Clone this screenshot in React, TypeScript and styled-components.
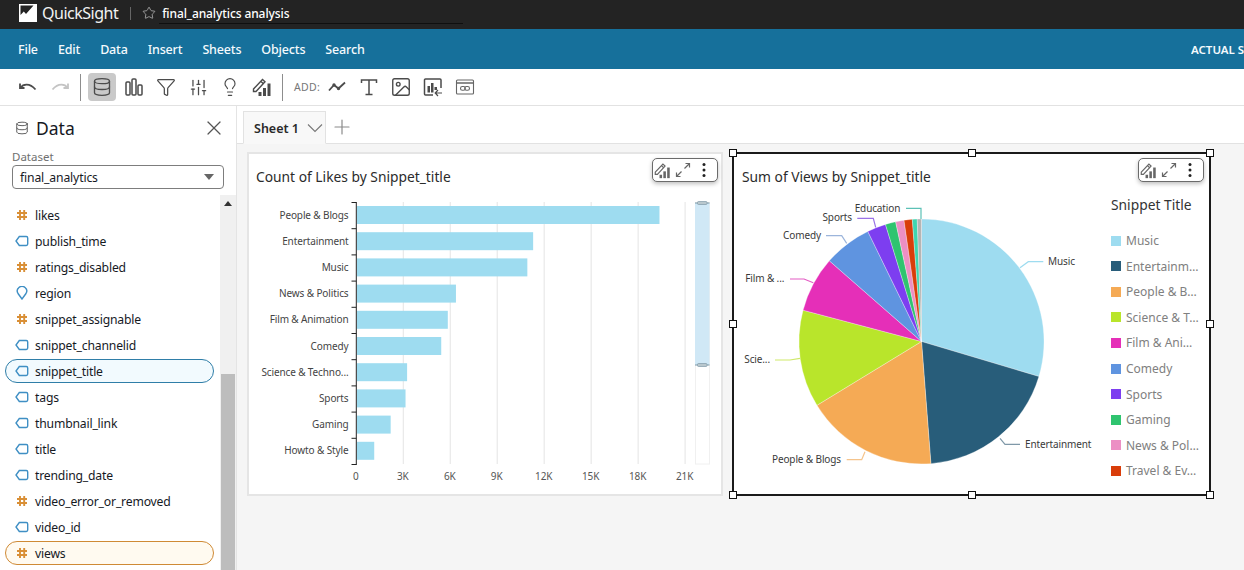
import React from "react";
import styled, { createGlobalStyle } from "styled-components";
import { Database, Filter, Image, Lightbulb, Plus, SlidersVertical, Star, X } from "lucide-react";

const font = `"Noto Sans", "Open Sans", Arial, sans-serif`;

const GlobalStyle = createGlobalStyle`
  html, body {
    margin: 0;
    padding: 0;
    background: #fff;
  }
  * {
    box-sizing: border-box;
  }
`;

const Page = styled.div`
  width: 1244px;
  height: 570px;
  overflow: hidden;
  display: flex;
  flex-direction: column;
  font-family: ${font};
  color: #16191f;
`;

const TopBar = styled.header`
  height: 29px;
  flex: none;
  background: #232323;
  display: flex;
  align-items: center;
  padding-left: 19px;
  padding-bottom: 3px;
  color: #fff;
`;

const Brand = styled.span`
  font-size: 16px;
  margin-left: 5px;
  letter-spacing: -0.5px;
  color: #f2f2f2;
`;

const TopDivider = styled.span`
  width: 1px;
  height: 13px;
  background: #666;
  margin: 0 11px 0 12px;
`;

const AnalysisName = styled.div`
  display: flex;
  align-items: center;
  width: 321px;
  gap: 6px;
  font-size: 12px;
  letter-spacing: -0.1px;
  font-weight: 500;
  height: 22px;
  position: relative;
  &::after {
    content: "";
    position: absolute;
    left: 17px;
    right: 0;
    bottom: 0;
    height: 1px;
    background: #0f0f0f;
  }
`;

const MenuBar = styled.nav`
  height: 40px;
  flex: none;
  background: #16709b;
  display: flex;
  align-items: center;
  padding-left: 18px;
  gap: 20px;
  color: #f4fafd;
  font-size: 12.5px;
  font-weight: 500;
  letter-spacing: -0.16px;
`;

const SizeLabel = styled.span`
  margin-left: auto;
  flex: 0 0 53px;
  overflow: hidden;
  white-space: nowrap;
  font-size: 11.5px;
  font-weight: 600;
  letter-spacing: 0;
`;

const Toolbar = styled.div`
  height: 37px;
  flex: none;
  display: flex;
  align-items: center;
  padding-left: 14px;
  gap: 4px;
  background: #fff;
  border-bottom: 1px solid #e2e2e2;
`;

const ToolButton = styled.span<{ $active?: boolean; $muted?: boolean }>`
  width: 28px;
  height: 28px;
  border-radius: 4px;
  display: flex;
  align-items: center;
  justify-content: center;
  background: ${(p) => (p.$active ? "#c9c9c9" : "transparent")};
  color: ${(p) => (p.$muted ? "#c4c4c4" : "#4b4b4b")};
`;

const ToolDivider = styled.span`
  width: 1px;
  height: 27px;
  background: #8d8d8d;
  margin: 0 3px 0 2px;
`;

const AddLabel = styled.span`
  font-size: 10.5px;
  color: #777;
  letter-spacing: 0.3px;
  margin-left: 4px;
  width: 25px;
`;

const Body = styled.div`
  flex: 1;
  min-height: 0;
  display: flex;
`;

const Sidebar = styled.aside`
  width: 237px;
  flex: none;
  border-right: 1px solid #e4e4e4;
  display: flex;
  flex-direction: column;
  min-height: 0;
`;

const SideHeader = styled.div`
  display: flex;
  align-items: center;
  height: 44px;
  padding: 0 10px 0 15px;
  color: #555;
  gap: 7px;
`;

const SideTitle = styled.h2`
  margin: 0;
  flex: 1;
  font-size: 17.5px;
  font-weight: 400;
  color: #16191f;
`;

const FieldLabel = styled.div`
  font-size: 11.5px;
  line-height: 14px;
  color: #6f6f6f;
  margin-left: 12px;
`;

const DatasetSelect = styled.div`
  margin: 1px 12px 0;
  height: 24px;
  border: 1px solid #7d7d7d;
  border-radius: 4px;
  display: flex;
  align-items: center;
  justify-content: space-between;
  padding: 0 9px 0 7px;
  font-size: 12.2px;
  letter-spacing: -0.15px;
  &::after {
    content: "";
    border-left: 5px solid transparent;
    border-right: 5px solid transparent;
    border-top: 6px solid #666;
  }
`;

const FieldArea = styled.div`
  margin-top: 6px;
  flex: 1;
  min-height: 0;
  display: flex;
  overflow: hidden;
`;

const FieldList = styled.ul`
  list-style: none;
  margin: 0;
  padding: 8px 6px 0 5px;
  width: 220px;
  flex: none;
  display: flex;
  flex-direction: column;
  gap: 2px;
`;

const tones = {
  none: { border: "transparent", bg: "transparent" },
  dimension: { border: "#2f7ea8", bg: "#f2fafe" },
  measure: { border: "#cf8a35", bg: "#fffaf0" },
};

const FieldRow = styled.li<{ $tone: keyof typeof tones }>`
  height: 24px;
  flex: none;
  display: flex;
  align-items: center;
  gap: 6px;
  padding-left: 9px;
  border-radius: 12px;
  border: 1px solid ${(p) => tones[p.$tone].border};
  background: ${(p) => tones[p.$tone].bg};
  font-size: 12.2px;
  letter-spacing: -0.18px;
`;

const FieldGlyph = styled.span`
  width: 14px;
  flex: none;
  display: flex;
  justify-content: center;
`;

const Track = styled.div`
  width: 16px;
  background: #f0f0f0;
  display: flex;
  flex-direction: column;
  align-items: center;
`;

const TrackArrow = styled.span`
  margin-top: 6px;
  border-left: 4px solid transparent;
  border-right: 4px solid transparent;
  border-bottom: 5px solid #333;
`;

const Thumb = styled.span`
  margin-top: 168px;
  width: 14px;
  flex: 1;
  background: #bdbdbd;
`;

const Main = styled.main`
  flex: 1;
  min-width: 0;
  display: flex;
  flex-direction: column;
`;

const TabBar = styled.div`
  height: 38px;
  flex: none;
  display: flex;
  align-items: flex-end;
  padding-left: 6px;
  border-bottom: 1px solid #e2e2e2;
  color: #8a8a8a;
`;

const Tab = styled.div`
  width: 83px;
  height: 33px;
  margin-bottom: -1px;
  background: #f8f8f8;
  border: 1px solid #e2e2e2;
  border-bottom-color: #f8f8f8;
  display: flex;
  align-items: center;
  padding: 1px 2px 0 10px;
  justify-content: space-between;
  font-size: 12.5px;
  font-weight: 600;
  color: #2a2a2a;
`;

const AddTab = styled.span`
  display: flex;
  margin: 0 0 4px 4px;
`;

const Canvas = styled.div`
  flex: 1;
  background: #f5f5f5;
  padding: 8px 0 0 10px;
  display: flex;
  align-items: flex-start;
  gap: 9px;
`;

const Card = styled.section<{ $selected?: boolean }>`
  position: relative;
  width: ${(p) => (p.$selected ? 479 : 476)}px;
  height: 344px;
  background: #fff;
  border: 2px solid ${(p) => (p.$selected ? "#1a1a1a" : "#e5e5e5")};
`;

const CardTitle = styled.h3<{ $inset: number }>`
  margin: 0;
  height: 36px;
  padding: 13px 0 0 ${(p) => p.$inset}px;
  font-size: 13.8px;
  line-height: 20px;
  font-weight: 400;
  color: #2b2b2b;
`;

const ActionBar = styled.div<{ $right: number }>`
  position: absolute;
  top: 4px;
  right: ${(p) => p.$right}px;
  width: 66px;
  height: 24px;
  display: flex;
  align-items: center;
  gap: 4px;
  padding-left: 1px;
  background: #fff;
  border: 1px solid #6b6b6b;
  border-radius: 5px;
  box-shadow: 0 2px 4px rgba(0, 0, 0, 0.25);
  color: #666;
  svg:last-child {
    margin-left: 4px;
  }
`;

const Handle = styled.span<{ $x: "start" | "mid" | "end"; $y: "start" | "mid" | "end" }>`
  position: absolute;
  width: 8px;
  height: 8px;
  background: #fff;
  border: 1.5px solid #111;
  ${(p) => (p.$x === "start" ? "left: -5px;" : p.$x === "end" ? "right: -5px;" : "left: calc(50% - 4px);")}
  ${(p) => (p.$y === "start" ? "top: -5px;" : p.$y === "end" ? "bottom: -5px;" : "top: calc(50% - 4px);")}
`;

const ChartRow = styled.div`
  display: flex;
  gap: 7px;
`;

const PlotSvg = styled.svg`
  display: block;
  font-family: ${font};
  font-size: 10px;
  letter-spacing: -0.12px;
  flex: none;
`;

const Legend = styled.div`
  flex: 1;
  padding-top: 5px;
`;

const LegendTitle = styled.div`
  font-size: 13.8px;
  line-height: 20px;
  color: #333;
  margin-bottom: 13px;
`;

const LegendRow = styled.div`
  height: 25.55px;
  display: flex;
  align-items: center;
  gap: 5px;
  font-size: 12px;
  color: #808080;
  white-space: nowrap;
`;

const Swatch = styled.span<{ $color: string }>`
  width: 10px;
  height: 10px;
  flex: none;
  background: ${(p) => p.$color};
`;

const HashIcon = () => (
  <svg width="12" height="12" viewBox="0 0 12 12" fill="none" stroke="#d98f36" strokeWidth="1.9">
    <path d="M4 1v10M8.2 1v10M1 4h10M1 8h10" />
  </svg>
);

const TagIcon = () => (
  <svg width="14" height="12" viewBox="0 0 14 12" fill="none" stroke="#3f8fc4" strokeWidth="1.4">
    <path d="M4.3 1.500h7a1.400 1.400 0 0 1 1.400 1.400v6.200a1.400 1.400 0 0 1-1.400 1.400h-7L1 6z" />
  </svg>
);

const PinIcon = () => (
  <svg width="14" height="14" viewBox="0 0 14 14" fill="none" stroke="#3f8fc4" strokeWidth="1.4">
    <path d="M7 13 3 7.500a4.700 4.700 0 1 1 8 0z" />
  </svg>
);

const fieldIcons = { hash: <HashIcon />, tag: <TagIcon />, pin: <PinIcon /> };

const UndoIcon = () => (
  <svg width="20" height="20" viewBox="0 0 20 20" fill="none" stroke="currentColor" strokeWidth="1.8">
    <path d="M2 6.500v4.500h4.500M2.600 10.600C5 7 11.500 5.600 17.500 12.500" />
  </svg>
);

const RedoIcon = () => (
  <svg width="20" height="20" viewBox="0 0 20 20" fill="none" stroke="currentColor" strokeWidth="1.8">
    <path d="M18 6.500v4.500h-4.500M17.400 10.600C15 7 8.500 5.600 2.500 12.500" />
  </svg>
);

const BarsIcon = () => (
  <svg width="20" height="20" viewBox="0 0 20 20" fill="none" stroke="currentColor" strokeWidth="1.5">
    <rect x="2" y="5" width="4" height="13" rx="1" />
    <rect x="8" y="2" width="4" height="16" rx="1" />
    <rect x="14" y="8" width="4" height="10" rx="1" />
  </svg>
);

const EditChartIcon = ({ size = 20 }: { size?: number }) => (
  <svg width={size} height={size} viewBox="0 0 20 20" fill="none" stroke="currentColor" strokeWidth="1.4">
    <path d="M1.500 12 10.500 2.500l2.500 2.300-9 9.700H1.500z" />
    <path d="M9 4.500l2.500 2.300" />
    <g fill="currentColor" stroke="none">
      <rect x="6.500" y="15" width="3" height="4" />
      <rect x="11" y="11" width="3" height="8" />
      <rect x="15.500" y="6.500" width="3" height="12.500" />
    </g>
  </svg>
);

const LineIcon = () => (
  <svg width="20" height="20" viewBox="0 0 20 20" fill="none" stroke="currentColor" strokeWidth="1.8">
    <path d="M2 13.500 7 8l4.500 3.500L18 5.500" />
    <g fill="currentColor">
      <circle cx="7" cy="8" r="0.8" />
      <circle cx="11.500" cy="11.500" r="0.8" />
    </g>
  </svg>
);

const TextIcon = () => (
  <svg width="20" height="20" viewBox="0 0 20 20" fill="none" stroke="currentColor" strokeWidth="1.5">
    <path d="M2.500 6V3h15v3M10 3v14.500M6.500 17.500h7" />
  </svg>
);

const InsightIcon = () => (
  <svg width="20" height="20" viewBox="0 0 20 20" fill="none" stroke="currentColor" strokeWidth="1.5">
    <path d="M10 18H2.500a1 1 0 0 1-1-1V3a1 1 0 0 1 1-1h14.500a1 1 0 0 1 1 1v8" />
    <g fill="currentColor" stroke="none">
      <rect x="4.500" y="9" width="2.500" height="6.500" />
      <rect x="8" y="6" width="2.500" height="9.500" />
      <rect x="11.500" y="10" width="2.500" height="3" />
    </g>
    <path d="M19 16h-6.500M15 13l-2.800 3 2.800 3" strokeWidth="1.2" />
  </svg>
);

const EmbedIcon = () => (
  <svg width="20" height="20" viewBox="0 0 20 20" fill="none" stroke="#666" strokeWidth="1.1">
    <rect x="1.500" y="3" width="17" height="14" rx="1" />
    <path d="M1.500 6h17" strokeWidth="1.5" />
    <rect x="5.500" y="9.500" width="4.800" height="3.800" rx="1.900" />
    <rect x="9.700" y="9.500" width="4.800" height="3.800" rx="1.900" />
  </svg>
);

const ExpandIcon = () => (
  <svg width="16" height="16" viewBox="0 0 16 16" fill="none" stroke="currentColor" strokeWidth="1.2">
    <path d="M9.500 6.500 14.500 1.500M10.500 1.500h4v4M6.500 9.500l-5 5M1.500 10.500v4h4" />
  </svg>
);

const DotsIcon = () => (
  <svg width="10" height="16" viewBox="0 0 10 16" fill="#222">
    <circle cx="5" cy="2.500" r="1.500" />
    <circle cx="5" cy="8" r="1.500" />
    <circle cx="5" cy="13.500" r="1.500" />
  </svg>
);

const TabChevron = () => (
  <svg width="16" height="10" viewBox="0 0 16 10" fill="none" stroke="#777" strokeWidth="1.1">
    <path d="M1 1.500 8 8.500 15 1.500" />
  </svg>
);

const Logo = () => (
  <svg width="18" height="18" viewBox="0 0 18 18">
    <rect width="18" height="18" fill="#fff" />
    <path d="M1.500 1.500H14.500L7 10 4.800 7.500 1.500 11z" fill="#232323" />
  </svg>
);

const fields: { name: string; icon: keyof typeof fieldIcons; tone?: keyof typeof tones }[] = [
  { name: "likes", icon: "hash" },
  { name: "publish_time", icon: "tag" },
  { name: "ratings_disabled", icon: "hash" },
  { name: "region", icon: "pin" },
  { name: "snippet_assignable", icon: "hash" },
  { name: "snippet_channelid", icon: "tag" },
  { name: "snippet_title", icon: "tag", tone: "dimension" },
  { name: "tags", icon: "tag" },
  { name: "thumbnail_link", icon: "tag" },
  { name: "title", icon: "tag" },
  { name: "trending_date", icon: "tag" },
  { name: "video_error_or_removed", icon: "hash" },
  { name: "video_id", icon: "tag" },
  { name: "views", icon: "hash", tone: "measure" },
];

const barData = [
  { label: "People & Blogs", likes: 19320 },
  { label: "Entertainment", likes: 11250 },
  { label: "Music", likes: 10880 },
  { label: "News & Politics", likes: 6320 },
  { label: "Film & Animation", likes: 5800 },
  { label: "Comedy", likes: 5380 },
  { label: "Science & Techno...", likes: 3200 },
  { label: "Sports", likes: 3100 },
  { label: "Gaming", likes: 2150 },
  { label: "Howto & Style", likes: 1100 },
];

const xTicks = ["0", "3K", "6K", "9K", "12K", "15K", "18K", "21K"];

function BarChart() {
  const x0 = 356.3;
  const step = 26.2;
  const perK = 46.97 / 3;
  return (
    <PlotSvg width={472} height={304} viewBox="249 190 472 304">
      {xTicks.slice(1).map((_, i) => (
        <line key={i} x1={x0 + 46.97 * (i + 1)} x2={x0 + 46.97 * (i + 1)} y1={202} y2={464} stroke="#e4e4e4" />
      ))}
      {barData.map((d, i) => (
        <g key={d.label}>
          <rect x={x0 + 0.7} y={206 + i * step} width={(d.likes / 1000) * perK} height={18} fill="#9edcf0" />
          <text x={348.5} y={215 + i * step} dy="0.35em" textAnchor="end" fill="#444">
            {d.label}
          </text>
        </g>
      ))}
      {barData.map((_, i) => (
        <line key={i} x1={351.5} x2={x0} y1={202.5 + i * step} y2={202.5 + i * step} stroke="#222" />
      ))}
      <line x1={351.5} x2={x0} y1={464.5} y2={464.5} stroke="#222" />
      <line x1={x0} x2={x0} y1={202} y2={465} stroke="#222" />
      {xTicks.map((t, i) => (
        <text key={t} x={x0 - 0.5 + 46.97 * i} y={476.5} dy="0.35em" textAnchor="middle" fill="#555">
          {t}
        </text>
      ))}
      <rect x={695.5} y={202.5} width={14} height={261.5} fill="#fff" stroke="#f0f0f0" />
      <rect x={695} y={203} width={14.5} height={162} fill="#d0e8f6" />
      <line x1={695} x2={709.5} y1={203} y2={203} stroke="#7f9aa8" />
      <line x1={695} x2={709.5} y1={365} y2={365} stroke="#7f9aa8" />
      <rect x={697.5} y={201.5} width={9.5} height={3} rx={1} fill="#b9c7cd" stroke="#7f9aa8" strokeWidth={0.7} />
      <rect x={697.5} y={363.5} width={9.5} height={3} rx={1} fill="#b9c7cd" stroke="#7f9aa8" strokeWidth={0.7} />
    </PlotSvg>
  );
}

const slices = [
  { name: "Music", legend: "Music", color: "#9edcf0", end: 106.6 },
  { name: "Entertainment", legend: "Entertainm…", color: "#285d7a", end: 175.6 },
  { name: "People & Blogs", legend: "People & B…", color: "#f5aa55", end: 238.6 },
  { name: "Science", legend: "Science & T…", color: "#b9e52b", end: 284.8 },
  { name: "Film", legend: "Film & Ani…", color: "#e52fb8", end: 311.2 },
  { name: "Comedy", legend: "Comedy", color: "#5f94e0", end: 334 },
  { name: "Sports", legend: "Sports", color: "#7d3ef0", end: 342.9 },
  { name: "Gaming", legend: "Gaming", color: "#2fc46f", end: 347.8 },
  { name: "News", legend: "News & Pol…", color: "#ec8fc4", end: 351.8 },
  { name: "Travel", legend: "Travel & Ev…", color: "#d93d0a", end: 355.7 },
  { name: "Education", legend: "", color: "#3fd5b0", end: 358 },
  { name: "Other", legend: "", color: "#b5b5b5", end: 360 },
];

const callouts = [
  { text: "Music", x: 1048, y: 261.5, anchor: "start", color: "#9edcf0", line: "1020,267.7 1028.3,261.7 1043.3,261.7" },
  { text: "Entertainment", x: 1025, y: 444.3, anchor: "start", color: "#7f98a8", line: "1000,438.3 1005,444.3 1020,444.3" },
  { text: "People & Blogs", x: 841, y: 459.5, anchor: "end", color: "#f5c48c", line: "865,451.7 861.7,459.7 846.7,459.7" },
  { text: "Scie...", x: 770, y: 359.5, anchor: "end", color: "#cfe96a", line: "800,358.3 790,360 775,360" },
  { text: "Film & ...", x: 784.3, y: 278.5, anchor: "end", color: "#e45cc4", line: "813.3,282.7 804,279 790,279" },
  { text: "Comedy", x: 821, y: 235.7, anchor: "end", color: "#9cb5db", line: "846.7,243.3 841.7,235.7 826,235.7" },
  { text: "Sports", x: 852, y: 217.7, anchor: "end", color: "#9a72e6", line: "875.7,227.3 873.3,218.3 857.3,218.3" },
  { text: "Education", x: 900.3, y: 208.5, anchor: "end", color: "#5cc1b6", line: "921,219 921,208.3 906,208.3" },
];

function polar(angle: number) {
  const r = 122.5;
  const a = (angle * Math.PI) / 180;
  return `${921.5 + r * Math.sin(a)} ${341.5 - r * Math.cos(a)}`;
}

function PieChart() {
  return (
    <PlotSvg width={370} height={304} viewBox="734 190 370 304">
      {slices.map((s, i) => {
        const start = i === 0 ? 0 : slices[i - 1].end;
        const large = s.end - start > 180 ? 1 : 0;
        return (
          <path
            key={s.name}
            d={`M921.5 341.5L${polar(start)}A122.5 122.5 0 ${large} 1 ${polar(s.end)}Z`}
            fill={s.color}
            stroke="#fff"
            strokeWidth={0.3}
          />
        );
      })}
      {callouts.map((c) => (
        <g key={c.text}>
          <polyline points={c.line} fill="none" stroke={c.color} strokeWidth={1.2} />
          <text x={c.x} y={c.y} dy="0.35em" textAnchor={c.anchor as "start" | "end"} fill="#3a3a3a">
            {c.text}
          </text>
        </g>
      ))}
    </PlotSvg>
  );
}

function CardActions({ right }: { right: number }) {
  return (
    <ActionBar $right={right}>
      <EditChartIcon size={17} />
      <ExpandIcon />
      <DotsIcon />
    </ActionBar>
  );
}

const menuItems = ["File", "Edit", "Data", "Insert", "Sheets", "Objects", "Search"];

export default function App() {
  return (
    <Page>
      <GlobalStyle />
      <TopBar>
        <Logo />
        <Brand>QuickSight</Brand>
        <TopDivider />
        <AnalysisName>
          <Star size={14} strokeWidth={1.3} color="#bbb" />
          final_analytics analysis
        </AnalysisName>
      </TopBar>
      <MenuBar>
        {menuItems.map((m) => (
          <span key={m}>{m}</span>
        ))}
        <SizeLabel>ACTUAL SIZE</SizeLabel>
      </MenuBar>
      <Toolbar>
        <ToolButton><UndoIcon /></ToolButton>
        <ToolButton $muted><RedoIcon /></ToolButton>
        <ToolDivider />
        <ToolButton $active><Database size={20} strokeWidth={1.6} /></ToolButton>
        <ToolButton><BarsIcon /></ToolButton>
        <ToolButton><Filter size={20} strokeWidth={1.5} /></ToolButton>
        <ToolButton><SlidersVertical size={19} strokeWidth={1.6} /></ToolButton>
        <ToolButton><Lightbulb size={20} strokeWidth={1.4} /></ToolButton>
        <ToolButton><EditChartIcon /></ToolButton>
        <ToolDivider />
        <AddLabel>ADD:</AddLabel>
        <ToolButton><LineIcon /></ToolButton>
        <ToolButton><TextIcon /></ToolButton>
        <ToolButton><Image size={22} strokeWidth={1.5} /></ToolButton>
        <ToolButton><InsightIcon /></ToolButton>
        <ToolButton><EmbedIcon /></ToolButton>
      </Toolbar>
      <Body>
        <Sidebar>
          <SideHeader>
            <Database size={14} strokeWidth={1.6} />
            <SideTitle>Data</SideTitle>
            <X size={24} strokeWidth={1.2} />
          </SideHeader>
          <FieldLabel>Dataset</FieldLabel>
          <DatasetSelect>final_analytics</DatasetSelect>
          <FieldArea>
            <FieldList>
              {fields.map((f) => (
                <FieldRow key={f.name} $tone={f.tone ?? "none"}>
                  <FieldGlyph>{fieldIcons[f.icon]}</FieldGlyph>
                  {f.name}
                </FieldRow>
              ))}
            </FieldList>
            <Track>
              <TrackArrow />
              <Thumb />
            </Track>
          </FieldArea>
        </Sidebar>
        <Main>
          <TabBar>
            <Tab>
              Sheet 1
              <TabChevron />
            </Tab>
            <AddTab><Plus size={24} strokeWidth={1.2} /></AddTab>
          </TabBar>
          <Canvas>
            <Card>
              <CardTitle $inset={7}>Count of Likes by Snippet_title</CardTitle>
              <BarChart />
              <CardActions right={3} />
            </Card>
            <Card $selected>
              <CardTitle $inset={8}>Sum of Views by Snippet_title</CardTitle>
              <ChartRow>
                <PieChart />
                <Legend>
                  <LegendTitle>Snippet Title</LegendTitle>
                  {slices
                    .filter((s) => s.legend)
                    .map((s) => (
                      <LegendRow key={s.name}>
                        <Swatch $color={s.color} />
                        {s.legend}
                      </LegendRow>
                    ))}
                </Legend>
              </ChartRow>
              <CardActions right={5} />
              <Handle $x="start" $y="start" />
              <Handle $x="mid" $y="start" />
              <Handle $x="end" $y="start" />
              <Handle $x="start" $y="mid" />
              <Handle $x="end" $y="mid" />
              <Handle $x="start" $y="end" />
              <Handle $x="mid" $y="end" />
              <Handle $x="end" $y="end" />
            </Card>
          </Canvas>
        </Main>
      </Body>
    </Page>
  );
}
